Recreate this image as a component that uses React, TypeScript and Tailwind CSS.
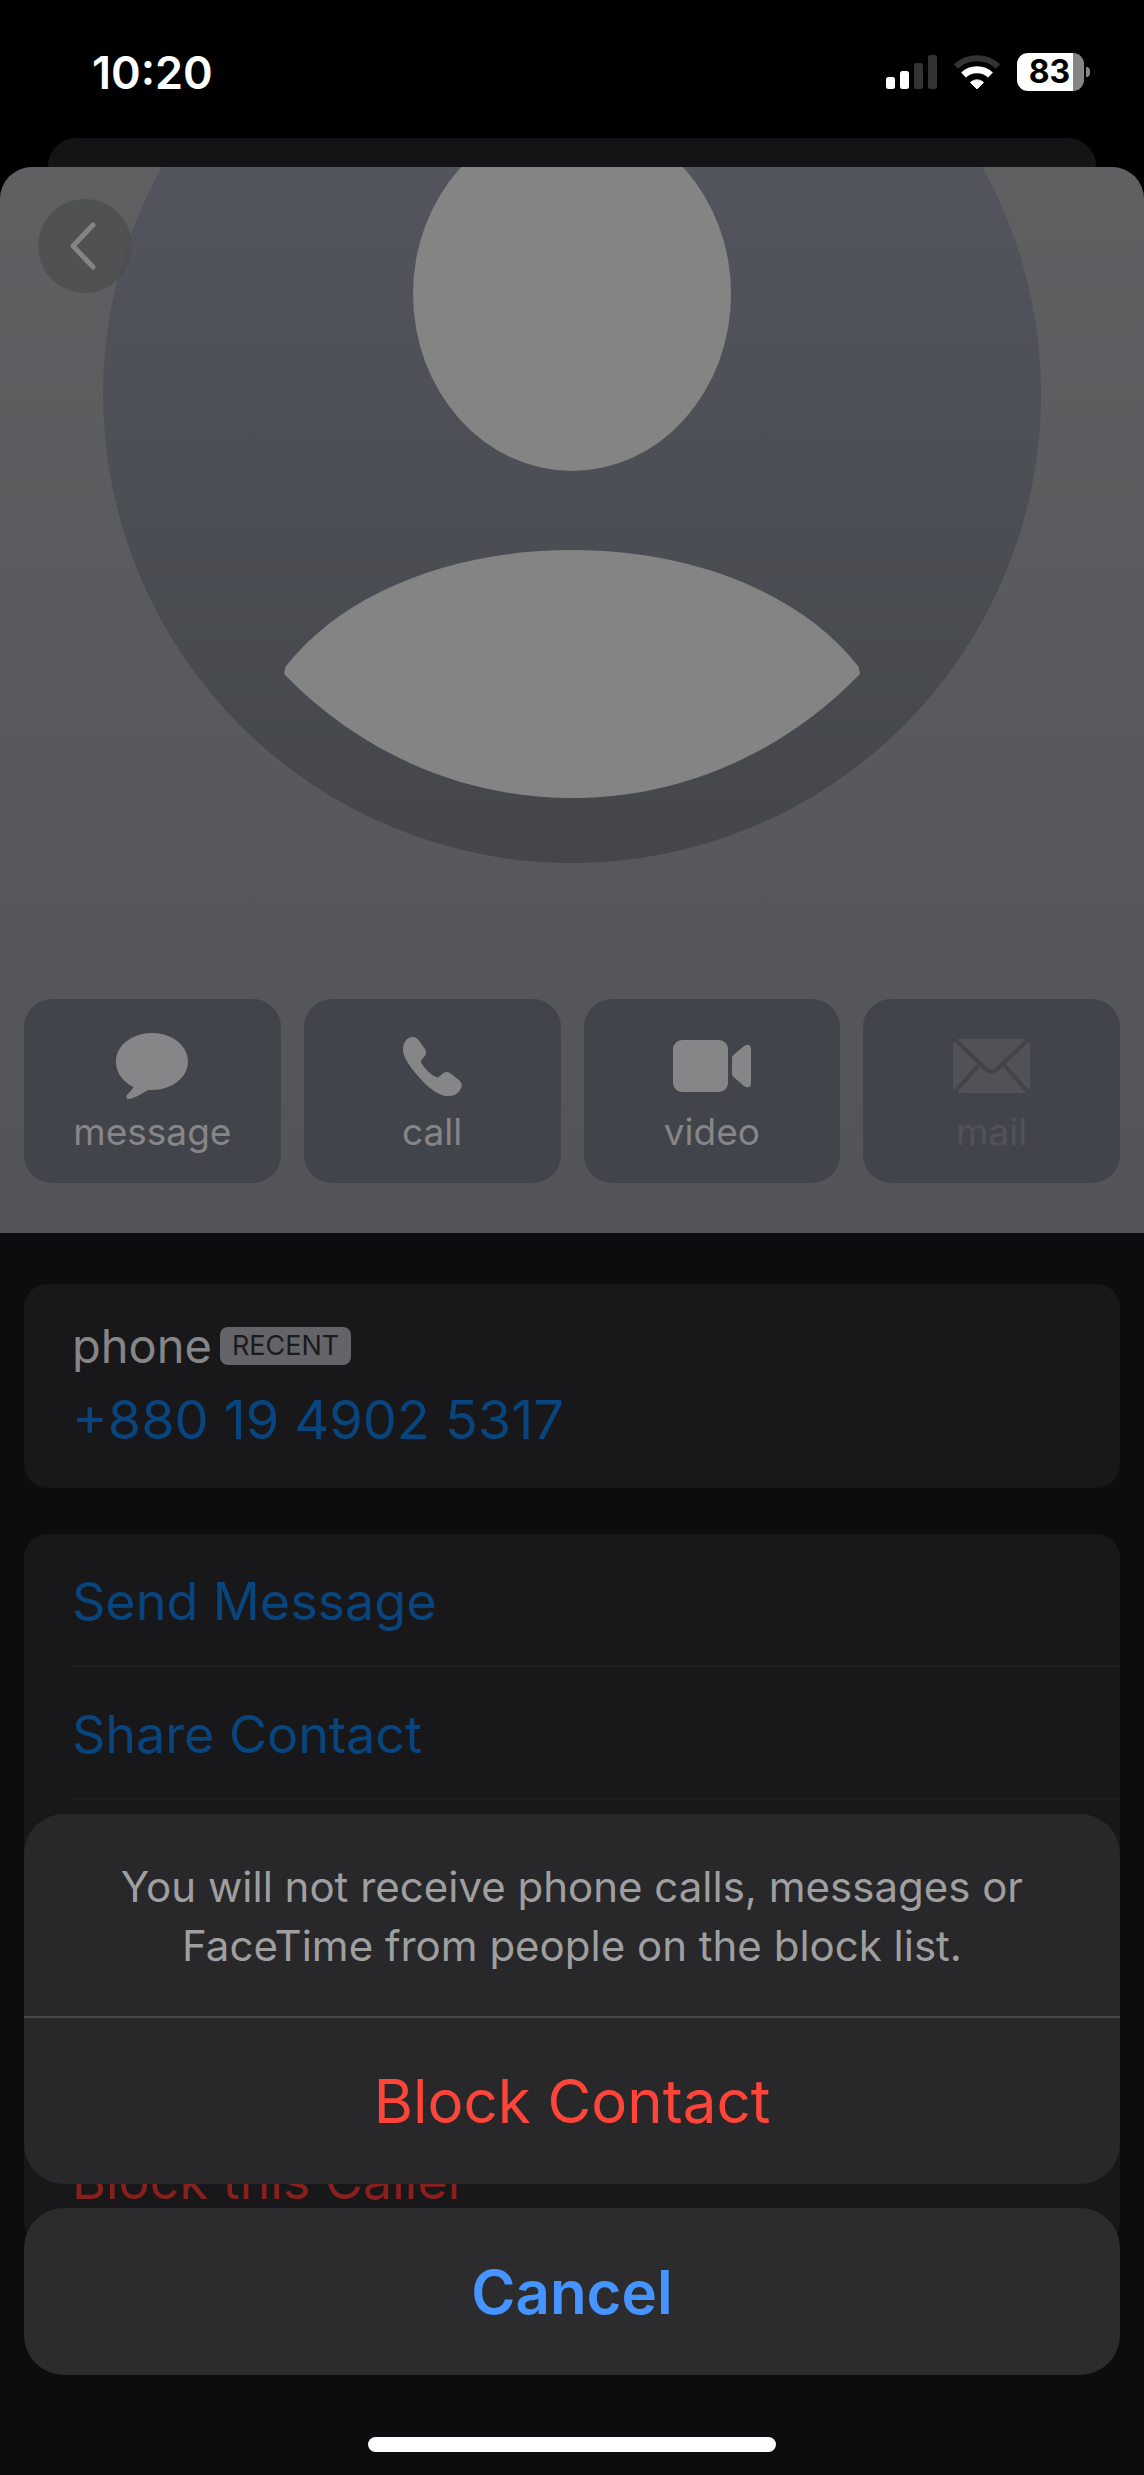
import type { ReactNode } from "react";

function SignalIcon() {
  return (
    <svg width="51" height="36" viewBox="0 0 51 36" aria-hidden="true">
      <rect x="0" y="23" width="9" height="12" rx="2.5" fill="#fff" />
      <rect x="14" y="17" width="9" height="18" rx="2.5" fill="#fff" />
      <rect x="28" y="9" width="9" height="26" rx="2.5" fill="#333" />
      <rect x="42" y="1" width="9" height="34" rx="2.5" fill="#333" />
    </svg>
  );
}

function WifiIcon() {
  return (
    <svg width="48" height="36" viewBox="0 0 48 36" fill="none" aria-hidden="true">
      <path d="M3 12.5C14.5 1.5 33.5 1.5 45 12.5" stroke="#333" strokeWidth="6" />
      <path d="M10.5 21C18 14 30 14 37.5 21" stroke="#fff" strokeWidth="7" />
      <path d="M24 35L17.5 28.5C21 25 27 25 30.5 28.5Z" fill="#fff" stroke="#fff" strokeWidth="1" strokeLinejoin="round" />
    </svg>
  );
}

function Battery() {
  return (
    <div className="flex items-center gap-0.5">
      <div className="flex h-[38px] w-[67px] items-center justify-center rounded-[11px] bg-[linear-gradient(to_right,#fff_83%,#858585_83%)] pr-0.5 text-[32px] leading-none font-bold text-black">
        83
      </div>
      <div className="h-2.5 w-1 rounded-r-full bg-[#858585]" />
    </div>
  );
}

function Avatar() {
  return (
    <svg className="mx-auto block w-[82%]" viewBox="0 0 938 696" role="img" aria-label="Contact photo">
      <defs>
        <linearGradient id="disc" x1="0" y1="0" x2="0" y2="696" gradientUnits="userSpaceOnUse">
          <stop offset="0" stopColor="#52555d" />
          <stop offset="0.5" stopColor="#4b4e54" />
          <stop offset="1" stopColor="#44464a" />
        </linearGradient>
      </defs>
      <circle cx="469" cy="227" r="469" fill="url(#disc)" />
      <ellipse cx="469" cy="127" rx="159" ry="177" fill="#848484" />
      <path
        d="M183 499C241 425 350 383 469 383S697 425 755 499Q758 505 756 508C676 590 573 631 469 631S262 590 182 508Q180 505 183 499Z"
        fill="#848484"
      />
    </svg>
  );
}

function MessageIcon() {
  return (
    <svg width="72" height="66" viewBox="0 0 72 66" fill="currentColor" aria-hidden="true">
      <path d="M36 0C56 0 72 12.5 72 28.5S56 57 36 57C34 57 32.5 56.8 31 57.5C27 60 20 65 13 66C10.5 66 9.5 64 11 62C13.5 59.5 16 57 17.5 54C7 49 0 40 0 28.5C0 12.5 16 0 36 0Z" />
    </svg>
  );
}

function CallIcon() {
  return (
    <svg width="59" height="59" viewBox="0 0 59 59" fill="currentColor" aria-hidden="true">
      <path d="M10 0C13 0 15 2 17 5L22 12C24 15 23 18 21 20C18 23 17 24 19 27C23 33 28 38 33 40C35 41 36 40 39 37C41 35 44 34 47 36L56 43C59 46 60 49 57 53C54 58 50 59 44 59C36 59 25 51 15 39C6 29 0 19 0 13C0 5 4 0 10 0Z" />
    </svg>
  );
}

function VideoIcon() {
  return (
    <svg width="78" height="52" viewBox="0 0 78 52" fill="currentColor" aria-hidden="true">
      <rect width="55" height="52" rx="9" />
      <path d="M59 18Q59 16 60.5 15L71 6Q74 4 76 5Q78 6 78 9V43Q78 46 76 47Q74 48 71 46L60.5 37Q59 36 59 34Z" />
    </svg>
  );
}

function MailIcon() {
  return (
    <svg width="77" height="54" viewBox="0 0 77 54" aria-hidden="true">
      <rect width="77" height="54" rx="6" fill="#515257" />
      <path
        d="M1 0L33 30Q38.5 35 44 30L76 0M1 54L26 26M76 54L51 26"
        fill="none"
        stroke="#42444b"
        strokeWidth="4"
      />
    </svg>
  );
}

function Tile({ label, icon, disabled = false }: { label: string; icon: ReactNode; disabled?: boolean }) {
  return (
    <button
      type="button"
      disabled={disabled}
      className="flex h-[184px] flex-1 flex-col items-center rounded-[28px] bg-[#42444b] pt-8 text-[#868688] disabled:text-[#50525a]"
    >
      <span className="flex h-[70px] items-center">{icon}</span>
      <span className="text-[37px] leading-[62px]">{label}</span>
    </button>
  );
}

export default function App() {
  return (
    <div className="relative flex min-h-screen flex-col overflow-hidden bg-black font-['Inter',sans-serif]">
      <header className="flex h-[138px] items-center justify-between pt-1.5 pr-[54px] pl-[92px]">
        <time className="text-[45px] leading-none font-semibold text-white">10:20</time>
        <div className="flex items-center gap-4">
          <SignalIcon />
          <WifiIcon />
          <Battery />
        </div>
      </header>

      <div className="mx-12 h-[29px] rounded-t-[28px] bg-[#141416]" />

      <main className="flex-1 overflow-hidden rounded-t-[32px] bg-[#0d0d0f]">
        <section className="relative bg-linear-to-b from-[#606063] to-[#535458] pb-[50px]">
          <Avatar />
          <button
            type="button"
            aria-label="Back"
            className="absolute top-8 left-[38px] flex size-[94px] items-center justify-center rounded-full bg-[#4c4d4f]/80 pr-1"
          >
            <svg width="28" height="50" viewBox="0 0 28 50" fill="none" aria-hidden="true">
              <path d="M24 4L4 25L24 46" stroke="#848484" strokeWidth="5" strokeLinecap="round" strokeLinejoin="round" />
            </svg>
          </button>
          <div className="mt-[136px] flex gap-[23px] px-6">
            <Tile label="message" icon={<MessageIcon />} />
            <Tile label="call" icon={<CallIcon />} />
            <Tile label="video" icon={<VideoIcon />} />
            <Tile label="mail" icon={<MailIcon />} disabled />
          </div>
        </section>

        <div className="flex flex-col gap-[46px] px-6 pt-[51px]">
          <section className="h-[204px] rounded-[24px] bg-[#18181a] px-12 pt-8">
            <div className="flex items-center gap-2">
              <h2 className="text-[47px] leading-[60px] text-[#868688]">phone</h2>
              <span className="rounded-[8px] bg-[#646468] px-3 text-[27px] leading-[38px] text-[#1b1b1d]">RECENT</span>
            </div>
            <a href="tel:+8801949025317" className="mt-2.5 block text-[54px] leading-[68px] text-[#08457f]">
              +880 19 4902 5317
            </a>
          </section>

          <section className="h-[532px] rounded-[24px] bg-[#18181a] pl-12 text-[52px] text-[#08457f]">
            <button type="button" className="block h-[133px] w-full border-b-2 border-[#1e1e20] pt-1 text-left">
              Send Message
            </button>
            <button type="button" className="block h-[133px] w-full border-b-2 border-[#1e1e20] pt-1 text-left">
              Share Contact
            </button>
          </section>

          <section className="h-[133px] rounded-[24px] bg-[#18181a] pl-12 text-[52px] text-[#8a201d]">
            <button type="button" className="block h-[133px] w-full pt-1 text-left">
              Block this Caller
            </button>
          </section>
        </div>
      </main>

      <div
        role="dialog"
        aria-label="Block Contact"
        className="absolute inset-x-0 bottom-0 flex flex-col items-center px-6 pb-[23px]"
      >
        <div className="w-full overflow-hidden rounded-[40px] bg-[#28282a]">
          <p className="border-b-2 border-[#48484a] px-16 pt-[43px] pb-[41px] text-center text-[42px] leading-[59px] text-[#9f9fa0]">
            You will not receive phone calls, messages or
            <br />
            FaceTime from people on the block list.
          </p>
          <button type="button" className="block h-[166px] w-full text-[60px] text-[#ff453a]">
            Block Contact
          </button>
        </div>
        <button
          type="button"
          className="mt-6 block h-[167px] w-full rounded-[40px] bg-[#2c2c2e] text-[60px] font-semibold text-[#4594ff]"
        >
          Cancel
        </button>
        <div className="mt-[62px] h-[15px] w-[408px] rounded-full bg-white" />
      </div>
    </div>
  );
}
